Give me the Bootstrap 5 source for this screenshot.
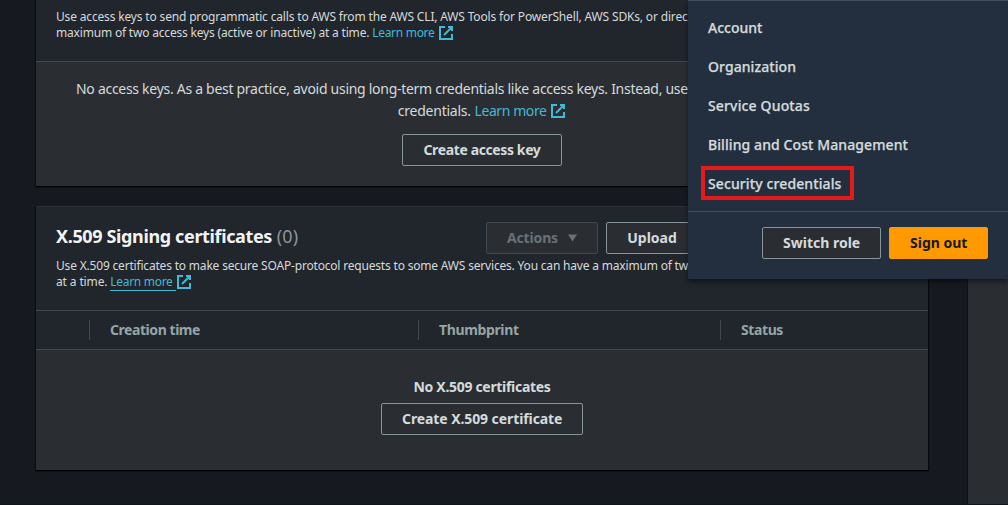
<!DOCTYPE html>
<html lang="en">
<head>
<meta charset="utf-8">
<meta name="viewport" content="width=device-width, initial-scale=1">
<title>Security credentials</title>
<link href="https://cdn.jsdelivr.net/npm/bootstrap@5.3.0/dist/css/bootstrap.min.css" rel="stylesheet">
<style>
body{height:505px;background:#16191f;color:#d5dbdb;font:14px/22px "Noto Sans","Open Sans",sans-serif;overflow:hidden}
.content-pane{width:968px;padding:0 39px 0 36px;border-right:1px solid #0e1014}
.side-pane{background:#2a2e33}
.panel{background:#2a2e33;box-shadow:0 1px 1px 0 #000a,1px 1px 1px 0 #0008,-1px 1px 1px 0 #0005}
.panel-head{background:#21252c;padding:0 20px;border-bottom:1px solid #414750}
.keys-head{height:62px;padding-top:9px}
.keys-body{height:124px;padding-top:16px}
.certs{height:264px;margin-top:20px;border-top:1px solid #2a2e35}
.certs-head{height:104px;padding-top:15px}
.desc{font-size:12px;line-height:16px;letter-spacing:-.165px}
.desc-certs{letter-spacing:-.187px}
.text-link{color:#44b9d6;text-decoration:none;letter-spacing:-.3px}
.body-link{letter-spacing:-.41px}
.hovered{border-bottom:1px solid #44b9d6;padding:0 3px 0 0}
.ext{width:16px;height:16px;fill:none;stroke:#44b9d6;stroke-width:2;vertical-align:-4px}
.desc .ext{margin-left:.7px}
.body-ext{vertical-align:-3px;margin-top:-2px}
.no-keys{padding-left:40px;letter-spacing:-.287px}
.aws-btn{--bs-btn-font-size:14px;--bs-btn-line-height:20px;--bs-btn-padding-x:20px;--bs-btn-padding-y:5px;--bs-btn-font-weight:700;--bs-btn-border-radius:2px;--bs-btn-color:#d5dbdb;--bs-btn-bg:#2a2e33;--bs-btn-border-color:#879596;--bs-btn-hover-color:#fff;--bs-btn-hover-bg:#21252c;--bs-btn-disabled-color:#687078;--bs-btn-disabled-bg:#2a2e33;--bs-btn-disabled-border-color:#414750;--bs-btn-disabled-opacity:1;height:32px;white-space:nowrap}
.aws-btn.signout{--bs-btn-color:#16191f;--bs-btn-bg:#f90;--bs-btn-border-color:#f90}
.caret-down{width:10px;height:8px;fill:#687078;margin-left:10px}
.panel-title{font-size:18px;line-height:22px;font-weight:700;letter-spacing:-.364px;color:#f2f3f3;margin:3px 0 1px}
.panel-title span{font-weight:400;color:#8d9499;letter-spacing:.1px;margin-left:.5px}
.cols{height:39px;background:#21252c;border-bottom:1px solid #414750;color:#95a5a6;font-weight:700;line-height:20px;padding-left:53px}
.cols div{height:20px;border-left:1px solid #414750;padding-left:20px}
.empty{padding-top:26px;font-weight:700;letter-spacing:-.31px}
.account-menu{left:688px;top:0;width:320px;height:279px;background:#232f3e;border-top:1px solid #414d5c;box-shadow:0 3px 5px #0007}
.account-menu nav{padding-top:7px;height:210px}
.account-menu nav a{height:39px;line-height:39px;padding-left:20px;color:#d5dbdb;font-weight:500;-webkit-text-stroke:.25px #d5dbdb;text-decoration:none}
.menu-foot{border-top:1px solid #414d5c;padding:15px 20px 20px}
.highlight{left:13px;top:165px;width:153px;height:34px;border:4px solid #e51a1a}
.page-foot{left:0;bottom:0;height:1px;background:#10151c}
</style>
</head>
<body class="position-relative">
<div class="d-flex h-100">
  <main class="content-pane flex-shrink-0">
    <section class="panel">
      <div class="panel-head keys-head text-nowrap desc">
        <div>Use access keys to send programmatic calls to AWS from the AWS CLI, AWS Tools for PowerShell, AWS SDKs, or direc</div>
        <div><span style="letter-spacing:-.187px">maximum of two access keys (active or inactive) at a time.</span> <a href="#" class="text-link">Learn more</a>&nbsp;<svg class="ext" viewBox="0 0 16 16"><path d="M10 2h4v4M6 10l8-8M14 9.05V14H2V2h5"/></svg></div>
      </div>
      <div class="keys-body text-nowrap">
        <div class="no-keys">No access keys. As a best practice, avoid using long-term credentials like access keys. Instead, use</div>
        <div class="text-center"><span style="letter-spacing:-.24px">credentials.</span> <a href="#" class="text-link body-link">Learn more</a>&nbsp;<svg class="ext body-ext" viewBox="0 0 16 16"><path d="M10 2h4v4M6 10l8-8M14 9.05V14H2V2h5"/></svg></div>
        <div class="text-center" style="margin-top:12px"><button class="btn aws-btn" style="width:160px;letter-spacing:-.379px">Create access key</button></div>
      </div>
    </section>
    <section class="panel certs">
      <div class="panel-head certs-head">
        <div class="d-flex align-items-start">
          <h2 class="panel-title">X.509 Signing certificates <span>(0)</span></h2>
          <div class="d-flex gap-2 ms-auto" style="margin-right:210px">
            <button class="btn aws-btn d-flex align-items-center" style="width:112px;letter-spacing:-.15px" disabled>Actions<svg class="caret-down" viewBox="0 0 10 8"><path d="M0 0h10L5 8z"/></svg></button>
            <button class="btn aws-btn" style="width:92px">Upload</button>
          </div>
        </div>
        <div class="text-nowrap desc desc-certs" style="margin-top:4px">
          <div>Use X.509 certificates to make secure SOAP-protocol requests to some AWS services. You can have a maximum of tw</div>
          <div><span style="letter-spacing:-.13px">at a time.</span> <a href="#" class="text-link hovered">Learn more</a><svg class="ext" viewBox="0 0 16 16"><path d="M10 2h4v4M6 10l8-8M14 9.05V14H2V2h5"/></svg></div>
        </div>
      </div>
      <div class="cols d-flex align-items-center">
        <div style="width:329px;letter-spacing:-.441px">Creation time</div>
        <div style="width:302px;letter-spacing:-.36px">Thumbprint</div>
        <div style="letter-spacing:-.398px">Status</div>
      </div>
      <div class="empty text-center">
        <div>No X.509 certificates</div>
        <button class="btn aws-btn" style="width:202px;margin-top:5px;letter-spacing:-.09px">Create X.509 certificate</button>
      </div>
    </section>
  </main>
  <aside class="side-pane flex-grow-1"></aside>
</div>
<div class="page-foot position-absolute w-100"></div>
<div class="account-menu position-absolute">
  <nav class="d-flex flex-column">
    <a href="#">Account</a>
    <a href="#" style="letter-spacing:.069px">Organization</a>
    <a href="#" style="letter-spacing:.153px">Service Quotas</a>
    <a href="#" style="letter-spacing:.091px">Billing and Cost Management</a>
    <a href="#" style="letter-spacing:.112px">Security credentials</a>
  </nav>
  <div class="menu-foot d-flex justify-content-end gap-2">
    <button class="btn aws-btn" style="width:119px">Switch role</button>
    <button class="btn aws-btn signout" style="width:99px">Sign out</button>
  </div>
  <div class="highlight position-absolute"></div>
</div>
<script src="https://cdn.jsdelivr.net/npm/bootstrap@5.3.0/dist/js/bootstrap.bundle.min.js"></script>
</body>
</html>
